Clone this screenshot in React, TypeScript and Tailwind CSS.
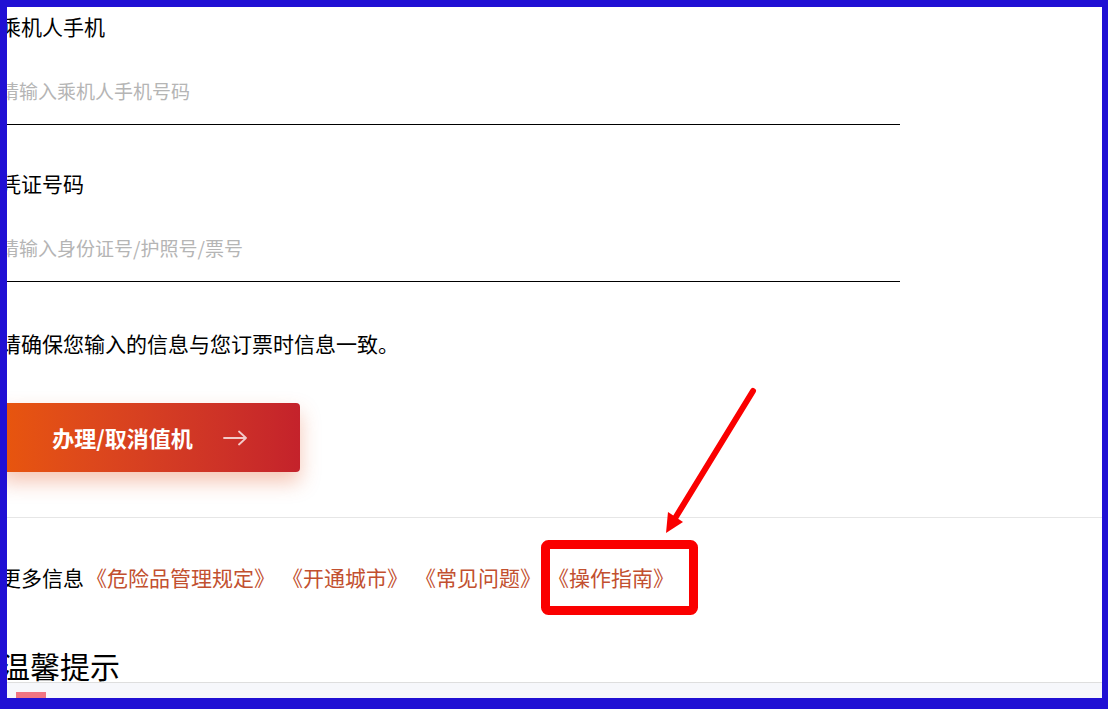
import { useState } from 'react'

const LINKS = ['《危险品管理规定》', '《开通城市》', '《常见问题》', '《操作指南》']

function Field({ label, placeholder }: { label: string; placeholder: string }) {
  const [value, setValue] = useState('')
  return (
    <div className="w-[900px] mb-[39px]">
      <div className="h-[40px] flex items-center text-[21px] text-black">{label}</div>
      <div className="pt-[18px] pb-[9px] border-b border-black">
        <input
          value={value}
          onChange={(e) => setValue(e.target.value)}
          placeholder={placeholder}
          className="block w-full h-[50px] bg-transparent outline-none text-[19px] text-black placeholder:text-[#b5b5b5]"
        />
      </div>
    </div>
  )
}

function ArrowRight() {
  return (
    <svg width="25" height="16" viewBox="0 0 25 16" fill="none" className="opacity-75">
      <path d="M1 8h22M16 1.5L23 8l-7 6.5" stroke="#fff" strokeWidth="1.8" strokeLinecap="round" strokeLinejoin="round" />
    </svg>
  )
}

export default function App() {
  return (
    <div className="relative w-[1108px] h-[709px] font-['Noto_Sans_CJK_SC',sans-serif]">
      <div className="w-full h-full overflow-hidden bg-white border-t-[7px] border-l-[7px] border-r-[6px] border-b-[11px] border-[#2010d4]">
        <div className="-ml-[7px]">
          <Field label="乘机人手机" placeholder="请输入乘机人手机号码" />
          <Field label="凭证号码" placeholder="请输入身份证号/护照号/票号" />

          <div className="mt-[42px] h-[40px] flex items-center text-[21px] text-black">
            请确保您输入的信息与您订票时信息一致。
          </div>

          <button
            type="button"
            className="mt-[39px] w-[300px] h-[69px] rounded-[4px] bg-gradient-to-r from-[#e8560c] to-[#c4222b] shadow-[0_10px_20px_rgba(226,90,40,0.35)] flex items-center justify-center gap-[30px] text-white text-[22px] font-bold"
          >
            <span>办理/取消值机</span>
            <ArrowRight />
          </button>

          <div className="mt-[45px] border-t border-[#e6e6e6]">
            <div className="mt-[40px] h-[40px] flex items-center text-[21px]">
              <span className="text-black mr-[2px]">更多信息</span>
              {LINKS.map((l) => (
                <a key={l} href="#" className="text-[#c2502f] mr-[7px]">
                  {l}
                </a>
              ))}
            </div>

            <div className="mt-[50px] h-[35px] flex items-center text-[30px] text-black border-b border-[#dedede]">
              温馨提示
            </div>
            <div className="bg-[#f6f7fb] h-[40px] pt-[9px] pl-[16px]">
              <div className="w-[30px] h-[20px] bg-[#f07482]" />
            </div>
          </div>
        </div>
      </div>

      <svg className="absolute left-0 top-0 pointer-events-none" width="1108" height="709" viewBox="0 0 1108 709">
        <rect x="545.5" y="544.5" width="148" height="66" rx="3" fill="none" stroke="#fa0000" strokeWidth="9" />
        <line x1="753" y1="391" x2="674" y2="520" stroke="#fa0000" strokeWidth="6" strokeLinecap="round" />
        <polygon points="666,533 668,512 683,522" fill="#fa0000" />
      </svg>
    </div>
  )
}
